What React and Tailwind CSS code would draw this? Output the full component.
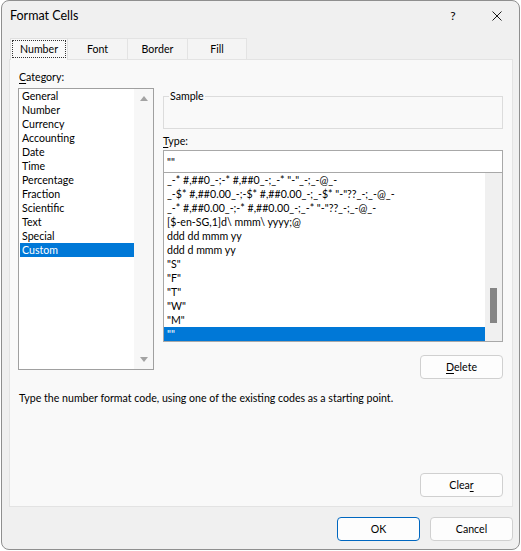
export default function App() {
  const categories = ["General","Number","Currency","Accounting","Date","Time","Percentage","Fraction","Scientific","Text","Special","Custom"];
  const types = [
    '_-* #,##0_-;-* #,##0_-;_-* "-"_-;_-@_-',
    '_-$* #,##0.00_-;-$* #,##0.00_-;_-$* "-"??_-;_-@_-',
    '_-* #,##0.00_-;-* #,##0.00_-;_-* "-"??_-;_-@_-',
    '[$-en-SG,1]d\\ mmm\\ yyyy;@',
    'ddd dd mmm yy',
    'ddd d mmm yy',
    '"S"',
    '"F"',
    '"T"',
    '"W"',
    '"M"',
    '""',
  ];
  return (
    <div className="w-[521px] h-[551px] bg-white font-['Lato',sans-serif]">
      <div className="ml-[1px] w-[519px] h-[550px] border border-[#8f8f8f] rounded-[8px] bg-[#f0f0f0] flex flex-col text-[10.6px] leading-[16px] text-black overflow-hidden">
        {/* title bar */}
        <div className="h-[37px] flex items-start pt-[7px] pl-[8px] pr-[17px]">
          <span className="text-[12.5px]">Format Cells</span>
          <span className="ml-auto w-[12px] text-center text-[12px]">?</span>
          <svg className="ml-[33px] mt-[3px]" width="10" height="10" viewBox="0 0 10 10">
            <path d="M0.5 0.5 L9.5 9.5 M9.5 0.5 L0.5 9.5" stroke="#1a1a1a" strokeWidth="1" fill="none" />
          </svg>
        </div>
        {/* tabs */}
        <div className="h-[21px] flex pl-[8px]">
          <div className="relative z-10 w-[58px] h-[22px] bg-[#f9f9f9] border border-b-0 border-[#e0e0e0] p-[1px] pb-[2px] flex">
            <div className="flex-1 border border-dotted border-[#333] flex items-center justify-center">Number</div>
          </div>
          <div className="w-[60px] h-[21px] bg-[#f4f4f4] border-t border-r border-[#e3e3e3] flex items-center justify-center">Font</div>
          <div className="w-[60px] h-[21px] bg-[#f4f4f4] border-t border-r border-[#e3e3e3] flex items-center justify-center">Border</div>
          <div className="w-[59px] h-[21px] bg-[#f4f4f4] border-t border-r border-[#e3e3e3] flex items-center justify-center">Fill</div>
        </div>
        {/* panel */}
        <div className="ml-[7px] w-[504px] h-[448px] bg-[#f9f9f9] border border-[#e3e3e3] flex flex-col pt-[9px] pb-[9px] px-[8px]">
          <div className="flex gap-[9px]">
            {/* left column */}
            <div className="w-[136px] flex flex-col">
              <div className="pl-[1px]"><u className="underline-offset-2">C</u>ategory:</div>
              <div className="mt-[3px] h-[282px] bg-white border border-[#a0a0a0] flex">
                <div className="flex-1 flex flex-col pl-[1px]">
                  {categories.map((c) => (
                    <div
                      key={c}
                      className={
                        c === "Custom"
                          ? "h-[14px] leading-[14px] pl-[2px] bg-[#0078d7] text-white"
                          : "h-[14px] leading-[14px] pl-[2px]"
                      }
                    >
                      {c}
                    </div>
                  ))}
                </div>
                <div className="w-[19px] bg-[#f7f7f7] flex flex-col items-center justify-between pt-[7px] pb-[7px]">
                  <svg width="8" height="5" viewBox="0 0 8 5"><path d="M4 0 L8 5 L0 5 Z" fill="#a3a3a3" /></svg>
                  <svg width="8" height="5" viewBox="0 0 8 5"><path d="M0 0 L8 0 L4 5 Z" fill="#a3a3a3" /></svg>
                </div>
              </div>
            </div>
            {/* right column */}
            <div className="w-[340px] flex flex-col pt-[19px]">
              <fieldset className="h-[41px] border border-[#dcdcdc]">
                <legend className="ml-[5px] px-[1px] leading-[16px]">Sample</legend>
              </fieldset>
              <div className="mt-[4px]"><u className="underline-offset-2">T</u>ype:</div>
              <div className="mt-[1px] h-[23px] bg-white border border-[#a8a8a8] pl-[3px] flex items-center">""</div>
              <div className="h-[169px] bg-white border border-t-0 border-[#a8a8a8] flex">
                <div className="flex-1 flex flex-col">
                  {types.map((t, i) => (
                    <div
                      key={i}
                      className={
                        i === types.length - 1
                          ? "h-[14px] leading-[14px] pl-[3px] bg-[#0078d7] text-white whitespace-pre"
                          : "h-[14px] leading-[14px] pl-[3px] whitespace-pre"
                      }
                    >
                      {t}
                    </div>
                  ))}
                </div>
                <div className="w-[17px] bg-[#f0f0f0] flex flex-col items-center pt-[115px]">
                  <div className="w-[7px] h-[35px] bg-[#858585]" />
                </div>
              </div>
              <button className="mt-[13px] self-end w-[83px] h-[24px] border border-[#d0d0d0] rounded-[4px] bg-[#fdfdfd] flex items-center justify-center">
                <span><u className="underline-offset-2">D</u>elete</span>
              </button>
            </div>
          </div>
          <div className="mt-[11px] pl-[1px]">Type the number format code, using one of the existing codes as a starting point.</div>
          <div className="flex-1" />
          <button className="self-end mr-[1px] w-[83px] h-[24px] border border-[#d0d0d0] rounded-[4px] bg-[#fdfdfd] flex items-center justify-center">
            <span>Clea<u className="underline-offset-2">r</u></span>
          </button>
        </div>
        {/* bottom buttons */}
        <div className="mt-[10px] flex justify-end gap-[10px] pr-[6px]">
          <button className="w-[83px] h-[24px] border border-[#0067c0] rounded-[4px] bg-[#fdfdfd] flex items-center justify-center">OK</button>
          <button className="w-[83px] h-[24px] border border-[#d0d0d0] rounded-[4px] bg-[#fdfdfd] flex items-center justify-center">Cancel</button>
        </div>
      </div>
    </div>
  );
}
